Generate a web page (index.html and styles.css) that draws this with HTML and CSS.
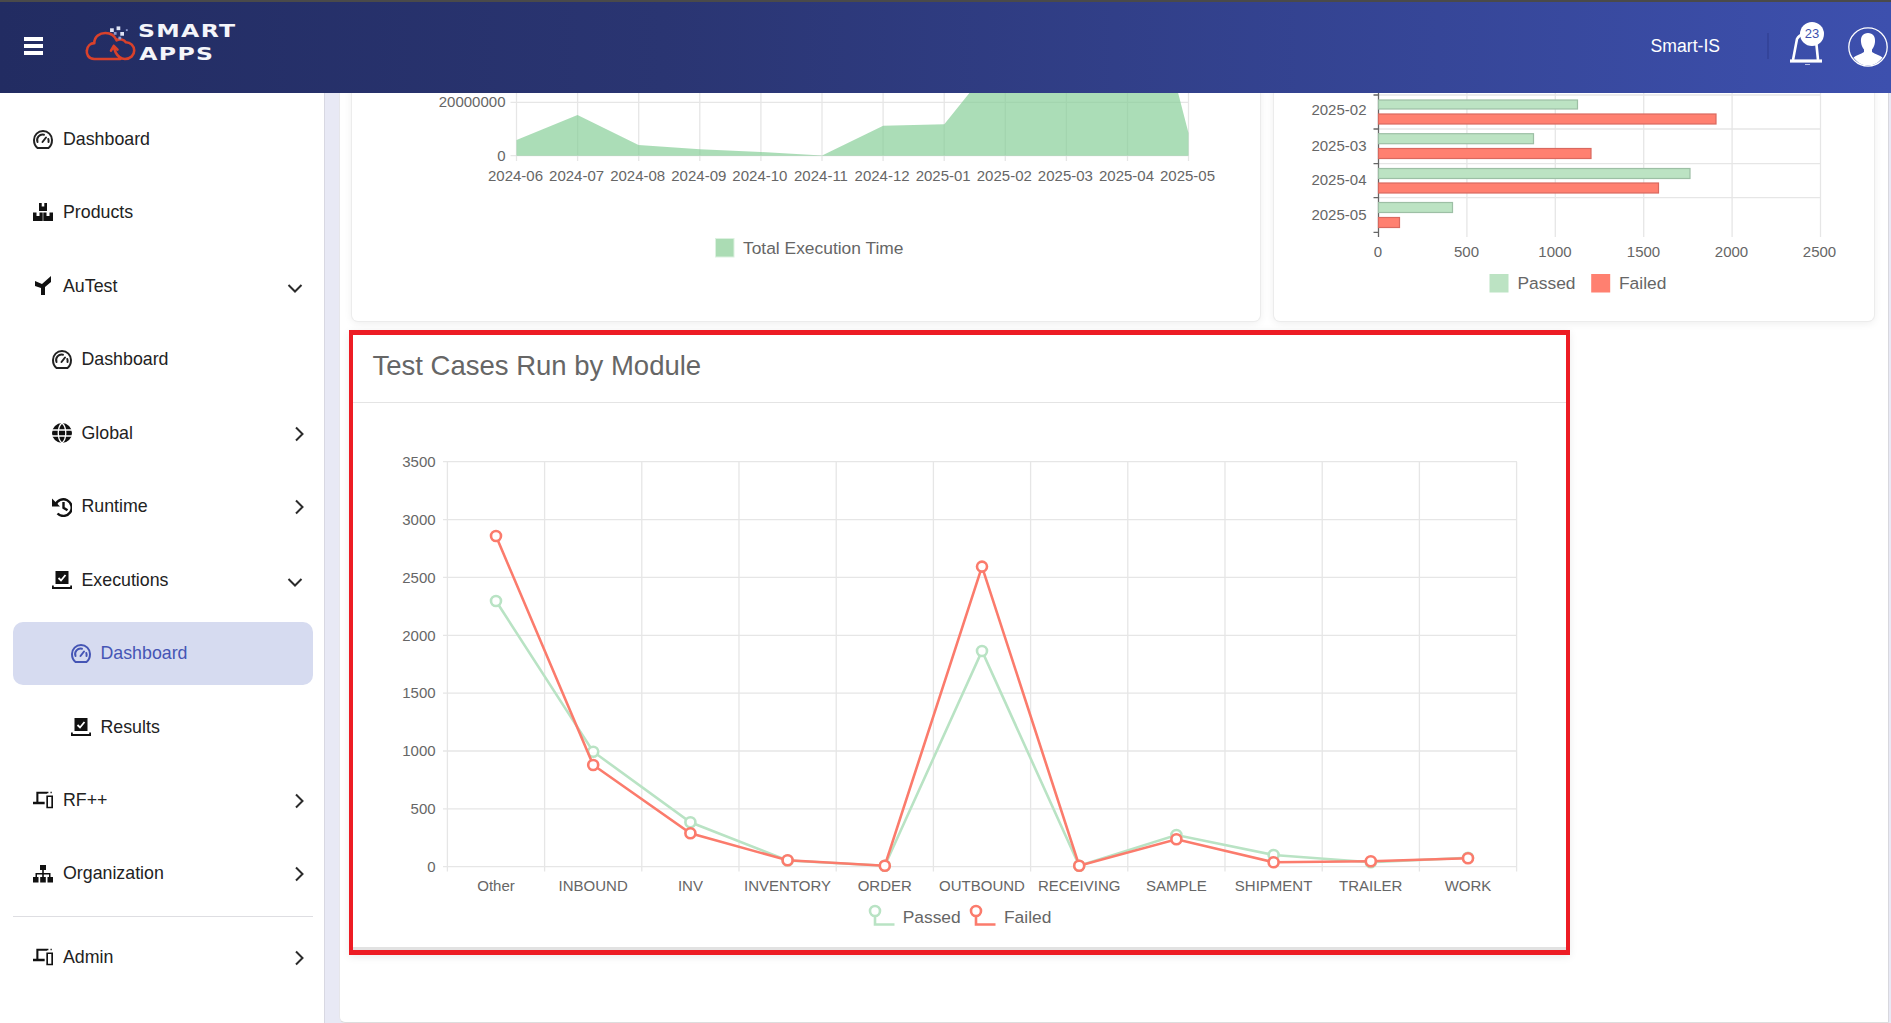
FILE: index.html
```html
<!DOCTYPE html>
<html>
<head>
    <title>Smart Apps</title>
    <link rel="stylesheet" href="styles.css">
</head>
<body>
<div class="app">
    <header class="topbar">
        <div class="burger"><span></span><span></span><span></span></div>
        <div class="logo">
            <svg class="logo-mark" viewBox="0 0 56 40">
                <path class="logo-cloud" d="M10 35 C3 35 1.500 29 2 26 C2.500 21 6 18 10 18 C10 11 16 7 22 7 C28 7 32 10 34 15 C37 13 42 14 44 17 C49 17 53 21 53 26 C53 31 49 35 43 35 C38 35 35 32 33 28 C32 25 31 23 31 21 M31 21 L28 26 M31 21 L35 25 M10 35 L38 35"/>
                <rect class="dot" x="27" y="2" width="4" height="4"/>
                <rect class="dot" x="34" y="0" width="4" height="4"/>
                <rect class="dot dim" x="31" y="6" width="3" height="3"/>
                <rect class="dot" x="38" y="6" width="4" height="4"/>
                <rect class="dot dim" x="44" y="3" width="2" height="2"/>
                <rect class="dot dim" x="36" y="11" width="3" height="3"/>
            </svg>
            <div class="logo-text"><span>SMART</span><span>APPS</span></div>
        </div>
        <div class="topbar-right">
            <span class="org-name">Smart-IS</span>
            <span class="topbar-sep"></span>
            <div class="bell">
                <svg viewBox="0 0 34 32" width="34" height="32">
                    <path class="bell-body" d="M4 24 L8 3 C9 1 11 -1 14 -2 M29 24 L27 4"/>
                    <path class="bell-base" d="M1 25 H33"/>
                    <path class="bell-body thin" d="M16 28.500 H21"/>
                </svg>
                <span class="badge">23</span>
            </div>
            <svg class="avatar" viewBox="0 0 40 40" width="40" height="40">
                <circle cx="20" cy="20" r="19.200"/>
                <path d="M20 6 C15 6 12.500 9.500 13 15 C13.300 18 14.500 20.500 16 22.500 V25 C13 27.500 8 28 5.500 30.500 C9 35.500 14 38.500 20 38.500 C26 38.500 31 35.500 34.500 30.500 C32 28 27 27.500 24 25 V22.500 C25.500 20.500 26.700 18 27 15 C27.500 9.500 25 6 20 6 Z"/>
            </svg>
        </div>
    </header>
    <div class="layout">
        <nav class="sidebar">
            <a class="nav-item">
                <svg class="icon" viewBox="0 0 20 20"><path class="gauge" d="M4.500 18 H15.500 C17.800 16.200 19 13.300 19 10 A9 9 0 0 0 1 10 C1 13.300 2.200 16.200 4.500 18 Z M4.500 12 A5.500 5.500 0 0 1 11 4.700"/><path class="gauge" d="M9.500 12 L13 7.500 M15.300 9 A5.500 5.500 0 0 1 15.500 12"/></svg>
                <span>Dashboard</span>
            </a>
            <a class="nav-item">
                <svg class="icon" viewBox="0 0 20 20"><path d="M6 0 H8.700 V3.500 H11.300 V0 H14 V8 H6 Z M0 9.500 H3.500 V13 H6.500 V9.500 H9.700 V18 H0 Z M10.300 9.500 H13.500 V13 H16.500 V9.500 H20 V18 H10.300 Z"/></svg>
                <span>Products</span>
            </a>
            <a class="nav-item">
                <svg class="icon" viewBox="0 0 20 20"><polygon points="2,5 9,8 18,0 18,6 12,11 12,19 8,19 8,12 2,10"/></svg>
                <span>AuTest</span>
                <svg class="chev down" viewBox="0 0 20 20"><path d="M3.500 7 L10 13.500 L16.500 7"/></svg>
            </a>
            <a class="nav-item level2">
                <svg class="icon" viewBox="0 0 20 20"><path class="gauge" d="M4.500 18 H15.500 C17.800 16.200 19 13.300 19 10 A9 9 0 0 0 1 10 C1 13.300 2.200 16.200 4.500 18 Z M4.500 12 A5.500 5.500 0 0 1 11 4.700"/><path class="gauge" d="M9.500 12 L13 7.500 M15.300 9 A5.500 5.500 0 0 1 15.500 12"/></svg>
                <span>Dashboard</span>
            </a>
            <a class="nav-item level2">
                <svg class="icon" viewBox="0 0 20 20"><circle cx="10" cy="10" r="10"/><path class="globe" d="M0 7 H20 M0 13 H20 M10 0 C5 4 5 16 10 20 C15 16 15 4 10 0 Z"/></svg>
                <span>Global</span>
                <svg class="chev" viewBox="0 0 20 20"><path d="M7 3.500 L13.500 10 L7 16.500"/></svg>
            </a>
            <a class="nav-item level2">
                <svg class="icon" viewBox="0 0 20 20"><polygon points="0,1.500 0,9.500 8,9.500"/><path class="hist" d="M3.500 8 A8.300 8.300 0 1 1 5.500 16.500 M11.500 5 V10.800 L15.500 13.300"/></svg>
                <span>Runtime</span>
                <svg class="chev" viewBox="0 0 20 20"><path d="M7 3.500 L13.500 10 L7 16.500"/></svg>
            </a>
            <a class="nav-item level2">
                <svg class="icon" viewBox="0 0 20 20"><path d="M3.500 1 H16.500 V14 H3.500 Z M0 15.500 H1.800 V17 H18.200 V15.500 H20 V19 H0 Z"/><path class="check" d="M6.500 8 L9 10.500 L13.500 5"/></svg>
                <span>Executions</span>
                <svg class="chev down" viewBox="0 0 20 20"><path d="M3.500 7 L10 13.500 L16.500 7"/></svg>
            </a>
            <a class="nav-item level3 active">
                <svg class="icon" viewBox="0 0 20 20"><path class="gauge" d="M4.500 18 H15.500 C17.800 16.200 19 13.300 19 10 A9 9 0 0 0 1 10 C1 13.300 2.200 16.200 4.500 18 Z M4.500 12 A5.500 5.500 0 0 1 11 4.700"/><path class="gauge" d="M9.500 12 L13 7.500 M15.300 9 A5.500 5.500 0 0 1 15.500 12"/></svg>
                <span>Dashboard</span>
            </a>
            <a class="nav-item level3">
                <svg class="icon" viewBox="0 0 20 20"><path d="M3.500 1 H16.500 V14 H3.500 Z M0 15.500 H1.800 V17 H18.200 V15.500 H20 V19 H0 Z"/><path class="check" d="M6.500 8 L9 10.500 L13.500 5"/></svg>
                <span>Results</span>
            </a>
            <a class="nav-item">
                <svg class="icon" viewBox="0 0 24 24"><path d="M4 2h13v2.500H6.500V14H14v3H0v-3h4zM16 6.500h8V22h-8zM18 8.500V20h4V8.500zM17 2h1.500v2H17zM21 2h1.500v2H21z" fill-rule="evenodd"/></svg>
                <span>RF++</span>
                <svg class="chev" viewBox="0 0 20 20"><path d="M7 3.500 L13.500 10 L7 16.500"/></svg>
            </a>
            <a class="nav-item">
                <svg class="icon" viewBox="0 0 20 20"><path d="M7 1 H13 V6 H10.800 V9 H17.500 V13 H16 V10.500 H10.800 V13 H9.200 V10.500 H4 V13 H2.500 V9 H9.200 V6 H7 Z M0 13 H5.500 V18.500 H0 Z M7.200 13 H12.800 V18.500 H7.200 Z M14.500 13 H20 V18.500 H14.500 Z"/></svg>
                <span>Organization</span>
                <svg class="chev" viewBox="0 0 20 20"><path d="M7 3.500 L13.500 10 L7 16.500"/></svg>
            </a>
            <div class="nav-sep"></div>
            <a class="nav-item">
                <svg class="icon" viewBox="0 0 24 24"><path d="M4 2h13v2.500H6.500V14H14v3H0v-3h4zM16 6.500h8V22h-8zM18 8.500V20h4V8.500zM17 2h1.500v2H17zM21 2h1.500v2H21z" fill-rule="evenodd"/></svg>
                <span>Admin</span>
                <svg class="chev" viewBox="0 0 20 20"><path d="M7 3.500 L13.500 10 L7 16.500"/></svg>
            </a>
        </nav>
        <main class="content">
            <div class="panel">
                <div class="chart-row">
                    <section class="card card-time">
                        <svg class="chart" viewBox="351.500 83 908 238">
                            <g class="grid">
                                <path d="M510 102.300 H1188 M510 155.700 H1188"/>
                                <path d="M516 93 V161 M577.100 93 V161 M638.200 93 V161 M699.300 93 V161 M760.400 93 V161 M821.500 93 V161 M882.600 93 V161 M943.700 93 V161 M1004.800 93 V161 M1065.900 93 V161 M1127 93 V161 M1188 93 V161"/>
                            </g>
                            <polygon class="area" points="516,155.700 516,140 577,115 638,145 699.400,149.300 760.500,152 821.600,155.500 882.700,125.700 943.800,124.300 1005,48 1166,48 1188,133 1188,155.700"/>
                            <g class="tick end">
                                <text x="505" y="106.500">20000000</text>
                                <text x="505" y="160.500">0</text>
                            </g>
                            <g class="tick mid">
                                <text x="515" y="180.800">2024-06</text>
                                <text x="576.100" y="180.800">2024-07</text>
                                <text x="637.200" y="180.800">2024-08</text>
                                <text x="698.300" y="180.800">2024-09</text>
                                <text x="759.400" y="180.800">2024-10</text>
                                <text x="820.500" y="180.800">2024-11</text>
                                <text x="881.600" y="180.800">2024-12</text>
                                <text x="942.700" y="180.800">2025-01</text>
                                <text x="1003.800" y="180.800">2025-02</text>
                                <text x="1064.900" y="180.800">2025-03</text>
                                <text x="1126" y="180.800">2025-04</text>
                                <text x="1187" y="180.800">2025-05</text>
                            </g>
                            <rect class="swatch-time" x="715" y="238.500" width="18.500" height="18.500"/>
                            <text class="legend" x="742.500" y="253.500">Total Execution Time</text>
                        </svg>
                    </section>
                    <section class="card card-month">
                        <svg class="chart" viewBox="1273.500 83 600.500 238">
                            <g class="grid">
                                <path d="M1378 95 H1820 M1378 129 H1820 M1378 163.700 H1820 M1378 197.700 H1820"/>
                                <path d="M1466.400 93 V237 M1554.800 93 V237 M1643.200 93 V237 M1731.600 93 V237 M1820 93 V237"/>
                            </g>
                            <g class="axis">
                                <path d="M1378 93 V237 M1373 95 H1378 M1373 129 H1378 M1373 163.700 H1378 M1373 197.700 H1378 M1373 232.300 H1378"/>
                            </g>
                            <g class="bar-pass">
                                <rect x="1378" y="100" width="199" height="9"/>
                                <rect x="1378" y="133.700" width="155" height="10"/>
                                <rect x="1378" y="168.500" width="311.500" height="10"/>
                                <rect x="1378" y="202.500" width="74" height="10"/>
                            </g>
                            <g class="bar-fail">
                                <rect x="1378" y="114" width="337.500" height="10"/>
                                <rect x="1378" y="148.500" width="212.500" height="10"/>
                                <rect x="1378" y="183" width="280" height="10"/>
                                <rect x="1378" y="217.500" width="21" height="10"/>
                            </g>
                            <g class="tick end">
                                <text x="1366" y="115.200">2025-02</text>
                                <text x="1366" y="150.500">2025-03</text>
                                <text x="1366" y="184.500">2025-04</text>
                                <text x="1366" y="219.500">2025-05</text>
                            </g>
                            <g class="tick mid">
                                <text x="1377.500" y="256.500">0</text>
                                <text x="1466" y="256.500">500</text>
                                <text x="1554.500" y="256.500">1000</text>
                                <text x="1643" y="256.500">1500</text>
                                <text x="1731" y="256.500">2000</text>
                                <text x="1819" y="256.500">2500</text>
                            </g>
                            <rect class="swatch-pass" x="1489" y="274" width="19" height="18.500"/>
                            <text class="legend" x="1517" y="288.500">Passed</text>
                            <rect class="swatch-fail" x="1590.700" y="274" width="19" height="18.500"/>
                            <text class="legend" x="1618.500" y="288.500">Failed</text>
                        </svg>
                    </section>
                </div>
                <section class="module-box">
                    <h2 class="card-title">Test Cases Run by Module</h2>
                    <svg class="module-chart" viewBox="352.500 403 1212 544">
                        <g class="grid">
                            <path d="M442 461.700 H1516 M442 519.600 H1516 M442 577.400 H1516 M442 635.300 H1516 M442 693.100 H1516 M442 751 H1516 M442 808.900 H1516 M442 866.700 H1516"/>
                            <path d="M446.400 461.700 V871.500 M543.600 461.700 V871.500 M640.800 461.700 V871.500 M738 461.700 V871.500 M835.200 461.700 V871.500 M932.400 461.700 V871.500 M1029.600 461.700 V871.500 M1126.800 461.700 V871.500 M1224 461.700 V871.500 M1321.200 461.700 V871.500 M1418.400 461.700 V871.500 M1515.600 461.700 V871.500"/>
                        </g>
                        <g class="tick end">
                            <text x="434.600" y="466.900">3500</text>
                            <text x="434.600" y="524.800">3000</text>
                            <text x="434.600" y="582.600">2500</text>
                            <text x="434.600" y="640.500">2000</text>
                            <text x="434.600" y="698.300">1500</text>
                            <text x="434.600" y="756.200">1000</text>
                            <text x="434.600" y="814.100">500</text>
                            <text x="434.600" y="871.900">0</text>
                        </g>
                        <g class="tick mid">
                            <text x="495" y="891.300">Other</text>
                            <text x="592.200" y="891.300">INBOUND</text>
                            <text x="689.400" y="891.300">INV</text>
                            <text x="786.600" y="891.300">INVENTORY</text>
                            <text x="883.800" y="891.300">ORDER</text>
                            <text x="981" y="891.300">OUTBOUND</text>
                            <text x="1078.200" y="891.300">RECEIVING</text>
                            <text x="1175.400" y="891.300">SAMPLE</text>
                            <text x="1272.600" y="891.300">SHIPMENT</text>
                            <text x="1369.800" y="891.300">TRAILER</text>
                            <text x="1467" y="891.300">WORK</text>
                        </g>
                        <g class="series pass">
                            <polyline points="495,601 592.200,751.700 689.400,822.300 786.600,860.500 883.800,865.700 981,651 1078.200,865.700 1175.400,835 1272.600,855 1369.800,862.300 1467,857.800"/>
                            <circle cx="495" cy="601" r="5"/>
                            <circle cx="592.200" cy="751.700" r="5"/>
                            <circle cx="689.400" cy="822.300" r="5"/>
                            <circle cx="786.600" cy="860.500" r="5"/>
                            <circle cx="883.800" cy="865.700" r="5"/>
                            <circle cx="981" cy="651" r="5"/>
                            <circle cx="1078.200" cy="865.700" r="5"/>
                            <circle cx="1175.400" cy="835" r="5"/>
                            <circle cx="1272.600" cy="855" r="5"/>
                            <circle cx="1369.800" cy="862.300" r="5"/>
                            <circle cx="1467" cy="857.800" r="5"/>
                        </g>
                        <g class="series fail">
                            <polyline points="495,536 592.200,765 689.400,833.300 786.600,860.300 883.800,865.700 981,566.600 1078.200,865.700 1175.400,839.300 1272.600,862.300 1369.800,861.300 1467,858.300"/>
                            <circle cx="495" cy="536" r="5"/>
                            <circle cx="592.200" cy="765" r="5"/>
                            <circle cx="689.400" cy="833.300" r="5"/>
                            <circle cx="786.600" cy="860.300" r="5"/>
                            <circle cx="883.800" cy="865.700" r="5"/>
                            <circle cx="981" cy="566.600" r="5"/>
                            <circle cx="1078.200" cy="865.700" r="5"/>
                            <circle cx="1175.400" cy="839.300" r="5"/>
                            <circle cx="1272.600" cy="862.300" r="5"/>
                            <circle cx="1369.800" cy="861.300" r="5"/>
                            <circle cx="1467" cy="858.300" r="5"/>
                        </g>
                        <g class="series pass">
                            <circle cx="874" cy="911" r="5"/>
                            <polyline points="874,916 874,924.500 893.500,924.500"/>
                        </g>
                        <text class="legend" x="901.700" y="922.800">Passed</text>
                        <g class="series fail">
                            <circle cx="975" cy="911" r="5"/>
                            <polyline points="975,916 975,924.500 994.500,924.500"/>
                        </g>
                        <text class="legend" x="1003" y="922.800">Failed</text>
                    </svg>
                </section>
            </div>
        </main>
    </div>
</div>
</body>
</html>
```

FILE: styles.css
```css
* {
    box-sizing: border-box;
}
html, body {
    margin: 0;
    height: 100%;
}
body {
    font-family: "Liberation Sans", Arial, sans-serif;
    color: #222;
    overflow: hidden;
}
.app {
    display: flex;
    flex-direction: column;
    height: 100vh;
}

/* top bar */
.topbar {
    flex: 0 0 93px;
    display: flex;
    align-items: center;
    position: relative;
    z-index: 2;
    padding: 0 0 0 24px;
    border-top: 2px solid #4a4a4a;
    background: linear-gradient(90deg, #222c62 0%, #2a3572 35%, #3d50ae 100%);
    color: #fff;
}
.burger {
    display: flex;
    flex-direction: column;
    gap: 3.500px;
    width: 19px;
    margin-top: -3px;
}
.burger span {
    height: 3.500px;
    background: #fff;
}
.logo {
    display: flex;
    align-items: center;
    margin-left: 42px;
    margin-top: -4px;
}
.logo-mark {
    width: 52px;
    height: 38px;
    margin-top: -2px;
}
.logo-cloud {
    fill: none;
    stroke: #d9412b;
    stroke-width: 2.800;
    stroke-linejoin: round;
    stroke-linecap: round;
}
.dot {
    fill: #dfe4f5;
}
.dot.dim {
    fill: #8c9ad0;
}
.logo-text {
    display: flex;
    flex-direction: column;
    margin-left: 1px;
    font-family: "DejaVu Sans", sans-serif;
    font-weight: 700;
    font-size: 18px;
    line-height: 23px;
    letter-spacing: 1px;
    transform: translateY(-4px) scaleX(1.310);
    transform-origin: left center;
    color: #f4f5fa;
}
.logo-text span + span {
    margin-left: 1px;
}
.topbar-right {
    display: flex;
    align-items: center;
    margin-left: auto;
}
.org-name {
    font-size: 17.600px;
    margin-top: -3px;
}
.topbar-sep {
    width: 2px;
    height: 26px;
    margin-left: 47px;
    margin-top: -3px;
    background: #34449a;
}
.bell {
    position: relative;
    width: 34px;
    height: 32px;
    margin-left: 20px;
    margin-top: 9px;
}
.bell svg {
    display: block;
    overflow: visible;
}
.bell-body {
    fill: none;
    stroke: #fff;
    stroke-width: 2.600;
}
.bell-base {
    fill: none;
    stroke: #fff;
    stroke-width: 3.200;
}
.bell-body.thin {
    stroke: #b8c0e6;
    stroke-width: 1;
}
.badge {
    position: absolute;
    left: 11px;
    top: -14.500px;
    width: 24px;
    height: 24px;
    border-radius: 50%;
    background: #fff;
    color: #3d50ae;
    font-size: 13px;
    line-height: 24px;
    text-align: center;
}
.avatar {
    margin-left: 25px;
    margin-right: 3px;
    margin-top: -2px;
}
.avatar circle {
    fill: none;
    stroke: #fff;
    stroke-width: 1.300;
}
.avatar path {
    fill: #fff;
}

/* sidebar */
.layout {
    flex: 1;
    display: flex;
    min-height: 0;
}
.sidebar {
    flex: 0 0 325px;
    padding: 15px 11px 0 13px;
    background: #fff;
    border-right: 1px solid #d8d8e2;
}
.nav-item {
    display: flex;
    align-items: center;
    height: 63px;
    margin-bottom: 10.450px;
    padding: 0 4px 0 20px;
    border-radius: 10px;
    font-size: 17.800px;
}
.nav-item.level2 {
    padding-left: 38.500px;
}
.nav-item.level3 {
    padding-left: 57.500px;
}
.nav-item.active {
    background: #d6dbf0;
    color: #4555b5;
}
.icon {
    flex: 0 0 20px;
    width: 20px;
    height: 20px;
    margin-right: 10px;
    fill: #111;
}
.active .icon {
    fill: none;
}
.gauge {
    fill: none;
    stroke: #222;
    stroke-width: 2;
    stroke-linecap: round;
}
.active .gauge {
    stroke: #4555b5;
}
.globe {
    fill: none;
    stroke: #fff;
    stroke-width: 1.300;
}
.hist {
    fill: none;
    stroke: #111;
    stroke-width: 2.400;
}
.check {
    fill: none;
    stroke: #fff;
    stroke-width: 1.800;
}
.chev {
    width: 20px;
    height: 20px;
    margin-left: auto;
    margin-top: 1px;
    fill: none;
    stroke: #2b2b2b;
    stroke-width: 2;
}
.chev.down {
    margin-right: 4px;
    margin-top: 3px;
}
.nav-sep {
    height: 1px;
    margin-bottom: 9px;
    background: #dedee2;
}

/* main area */
.content {
    flex: 1;
    min-width: 0;
    padding: 0 2px 0 14px;
    background: #e8e9f5;
}
.panel {
    height: 100%;
    overflow: hidden;
    padding: 0 12.500px;
    background: #fff;
    border-bottom: 1px solid #ddd;
    border-left: 1px solid #e6e6ea;
    border-right: 1px solid #d8d8de;
    border-radius: 0 0 0 6px;
}
.chart-row {
    display: flex;
    gap: 14px;
    margin-top: -10px;
    margin-left: -1px;
}
.card {
    height: 238px;
    background: #fff;
    border-radius: 6px;
    box-shadow: 0 0 0 1px #ececec, 0 2px 8px rgba(0, 0, 0, 0.08);
}
.card-time {
    flex: 0 0 908px;
}
.card-month {
    flex: 0 0 600.500px;
}
.chart {
    display: block;
    width: 100%;
    height: 100%;
}
.module-box {
    width: 1221px;
    height: 625.200px;
    margin-top: 8.500px;
    margin-left: -4px;
    border: 5px solid #ed1c24;
    border-width: 5px 4.500px 5px 4.500px;
    background: #fff;
    box-shadow: 0 2px 8px rgba(0, 0, 0, 0.08);
}
.card-title {
    height: 68px;
    margin: 0;
    padding: 15.500px 0 0 20px;
    border-bottom: 1px solid #e4e4e4;
    color: #666;
    font-size: 27.500px;
    font-weight: 400;
    line-height: 32px;
}
.module-chart {
    display: block;
    width: 100%;
    height: 547px;
    border-bottom: 3px solid #e2e2e2;
}

/* chart parts */
.grid path {
    fill: none;
    stroke: #e6e6e6;
    stroke-width: 1.300;
}
.axis path {
    fill: none;
    stroke: #666;
    stroke-width: 1.300;
}
.tick text {
    fill: #666;
    font-size: 15px;
}
.tick.end {
    text-anchor: end;
}
.tick.mid {
    text-anchor: middle;
}
.legend {
    fill: #666;
    font-size: 17.400px;
}
.area {
    fill: #7fcb92;
    fill-opacity: 0.66;
}
.swatch-time {
    fill: #abdcb4;
    stroke: #dcf1e0;
}
.bar-pass rect {
    fill: #bce3c3;
    stroke: #9dbfa5;
    stroke-width: 1.200;
}
.bar-fail rect {
    fill: #ff8070;
    stroke: #d9695f;
    stroke-width: 1.200;
}
.swatch-pass {
    fill: #bce3c3;
}
.swatch-fail {
    fill: #ff8070;
}
.series polyline {
    fill: none;
    stroke-width: 2.600;
}
.series circle {
    fill: #fff;
    stroke-width: 2.600;
}
.series.pass polyline, .series.pass circle {
    stroke: #b9e3c4;
}
.series.fail polyline, .series.fail circle {
    stroke: #fb7b6c;
}
```
